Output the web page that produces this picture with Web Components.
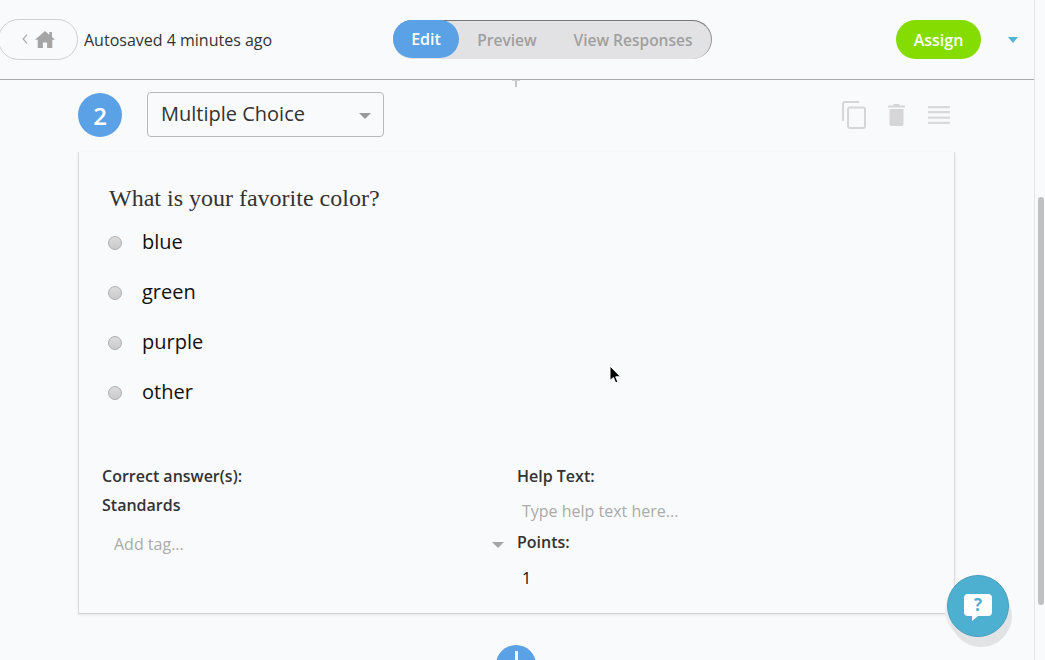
<!DOCTYPE html>
<html>
<head>
<meta charset="utf-8">
<title>Question editor</title>
<style>
html, body { margin: 0; height: 660px; overflow: hidden; background: #f9fafc; }
body { font-family: "Open Sans", sans-serif; color: #333; }
</style>
</head>
<body>
<editor-app>
    <top-bar></top-bar>
    <question-head number="2" type="Multiple Choice"></question-head>
    <question-card>
        <span slot="title">What is your favorite color?</span>
        <choice-option>blue</choice-option>
        <choice-option>green</choice-option>
        <choice-option>purple</choice-option>
        <choice-option>other</choice-option>
    </question-card>
    <add-button></add-button>
</editor-app>
<fake-scrollbar></fake-scrollbar>
<help-fab></help-fab>
<mouse-cursor></mouse-cursor>

<script>
(() => {
    const define = (name, html, init) => {
        customElements.define(name, class extends HTMLElement {
            constructor() {
                super();
                this.attachShadow({mode: 'open'});
            }
            connectedCallback() {
                this.shadowRoot.innerHTML = typeof html === 'function' ? html(this) : html;
                if (init) init(this);
            }
        });
    };

    define('editor-app', `
    <style>
    :host { display: flex; flex-direction: column; width: 1034px; height: 660px; overflow: hidden; }
    </style>
    <slot></slot>`);

    define('top-bar', `
    <style>
    :host { display: flex; align-items: center; box-sizing: border-box; height: 80px; flex: none;
        border-bottom: 1px solid #a9aaad; position: relative; padding: 0 16px 0 0; }
    .home { box-sizing: border-box; width: 80px; height: 41px; margin-left: -2px; flex: none;
        border: 1px solid #cfcfd1; border-radius: 21px; display: flex; align-items: center; padding-left: 23px; gap: 7px; }
    .home svg { display: block; }
    .home .chev { margin-top: -2px; }
    .saved { font-size: 16px; margin: 1px 0 0 6px; width: 309px; flex: none; color: #333; white-space: nowrap; }
    .seg { display: flex; align-items: stretch; box-sizing: border-box; width: 319px; height: 39px; flex: none; background: #e2e2e4;
        border-radius: 20px; border-top: 1px solid #77787a; border-right: 1px solid #98989a; font-size: 15.5px; font-weight: 600; color: #a09f9f; }
    .seg span { display: flex; align-items: center; justify-content: center; padding-bottom: 1px; }
    .seg .on { width: 66px; margin-top: -1px; background: #5ba1e5; color: #fff; border-radius: 19px; height: 37px; font-size: 16px; }
    .prev { width: 96px; }
    .view { width: 156px; }
    .assign { margin-left: 184px; box-sizing: border-box; width: 85px; height: 39px; flex: none; border-radius: 20px; background: #85dc00; color: #fff;
        font-size: 16px; font-weight: 600; display: flex; align-items: center; justify-content: center; }
    .caret { margin-left: 27px; width: 0; height: 0; border: 5.5px solid transparent; border-top: 6px solid #4fb3d4; border-bottom: 0; }
    .tick { position: absolute; left: 515px; top: 80px; width: 2px; height: 7px; background: #c4c4c6; }
    .tick::before { content: ""; position: absolute; left: -3px; top: 0; width: 8px; height: 1px; background: #d4d4d6; }
    </style>
    <div class="home">
        <svg class="chev" width="6" height="10" viewBox="0 0 6 10"><path d="M5 .7 1.200 5 5 9.300" fill="none" stroke="#aaa" stroke-width="1.2"/></svg>
        <svg width="20" height="17" viewBox="0 0 20 17"><path d="M10 0 0 8.800h2.700V17h5.200v-5.600h4.200V17h5.200V8.800H20l-3-2.700V1h-2.600v2.800z" fill="#a5a5a5"/></svg>
    </div>
    <div class="saved">Autosaved 4 minutes ago</div>
    <div class="seg"><span class="on">Edit</span><span class="prev">Preview</span><span class="view">View Responses</span></div>
    <div class="assign">Assign</div>
    <div class="caret"></div>
    <div class="tick"></div>`);

    define('question-head', el => `
    <style>
    :host { display: flex; align-items: center; flex: none; box-sizing: border-box; height: 72px; padding: 12px 84px 15px 78px; }
    .num { width: 44px; height: 44px; border-radius: 50%; background: #5ba1e5; color: #fff; font-size: 24px; font-weight: 600;
        display: flex; align-items: center; justify-content: center; flex: none; margin-top: 1px; }
    .select { box-sizing: border-box; width: 237px; height: 45px; margin-left: 25px; border: 1px solid #b9b9bb; border-radius: 4px; flex: none;
        display: flex; align-items: center; justify-content: space-between; padding: 0 12px 0 13px; font-size: 20px; color: #333; }
    .select span { padding-bottom: 2px; }
    .select i { width: 0; height: 0; border: 6px solid transparent; border-top: 6px solid #999; border-bottom: 0; margin-top: 2px; }
    .tools { margin-left: auto; display: flex; align-items: center; gap: 23px; padding-top: 1px; }
    .tools svg:first-child { margin-right: -1px; }
    svg { display: block; }
    </style>
    <div class="num">${el.getAttribute('number')}</div>
    <div class="select"><span>${el.getAttribute('type')}</span><i></i></div>
    <div class="tools">
        <svg width="24" height="28" viewBox="0 0 24 28"><path d="M17 1H3Q1 1 1 3v17" fill="none" stroke="#d6d6d8" stroke-width="2"/><rect x="6" y="6.500" width="17" height="20.500" rx="2" fill="none" stroke="#d6d6d8" stroke-width="2"/></svg>
        <svg width="17" height="22" viewBox="0 0 17 22"><path d="M0 1.500h5.500V0h6v1.500H17v2H0zM1.500 5h14v15q0 2-2 2h-10q-2 0-2-2z" fill="#d6d6d8"/></svg>
        <svg width="22" height="18" viewBox="0 0 22 18"><path d="M0 0h22v2.200H0zM0 5h22v2.200H0zM0 10.500h22v2.200H0zM0 15.800h22V18H0z" fill="#d9d9db"/></svg>
    </div>`);

    define('question-card', `
    <style>
    :host { display: block; box-sizing: border-box; flex: none; width: 877px; height: 462px; margin-left: 78px;
        border: 1px solid #dcdcde; border-top: 0; border-bottom: 1px solid #d3d3d5; box-shadow: 0 1px 2px #e4e4e6; padding: 30px 23px 0 23px; }
    .title { font-family: "Liberation Serif", serif; font-size: 24px; line-height: 32px; color: #333; padding-left: 7px; }
    .opts { display: flex; flex-direction: column; margin-top: 2px; padding-left: 6px; }
    .bottom { display: grid; grid-template-columns: 415px 1fr; margin-top: 46px; font-size: 16px; }
    .col { display: flex; flex-direction: column; }
    b { font-weight: 600; color: #333; line-height: 29px; display: block; white-space: nowrap; }
    .tag { display: flex; justify-content: space-between; align-items: center; padding: 13px 13px 0 12px; line-height: 22px; color: #aaa; font-size: 16px; }
    .tag i { width: 0; height: 0; border: 6px solid transparent; border-top: 6px solid #a5a5a5; border-bottom: 0; margin-top: 2px; }
    .help { color: #aaa; font-size: 16px; line-height: 24px; padding: 8px 0 0 5px; }
    .pts { margin-top: 5px; }
    .one { font-size: 16px; color: #111; line-height: 24px; padding: 9px 0 0 5px; }
    </style>
    <div class="title"><slot name="title"></slot></div>
    <div class="opts"><slot></slot></div>
    <div class="bottom">
        <div class="col">
            <b>Correct answer(s):</b>
            <b>Standards</b>
            <div class="tag"><span>Add tag...</span><i></i></div>
        </div>
        <div class="col">
            <b>Help Text:</b>
            <div class="help">Type help text here...</div>
            <b class="pts">Points:</b>
            <div class="one">1</div>
        </div>
    </div>`);

    define('choice-option', `
    <style>
    :host { display: flex; align-items: center; height: 50px; font-size: 20px; color: #111; }
    i { width: 14px; height: 14px; box-sizing: border-box; border-radius: 50%; flex: none; margin: 4px 20px 0 0;
        background: linear-gradient(#dcdcdc, #cacaca); border: 1px solid #aeaeae; }
    </style>
    <i></i><slot></slot>`);

    define('add-button', `
    <style>
    :host { display: block; flex: none; width: 40px; height: 40px; margin: 31px 0 0 496px; border-radius: 50%; background: #5ba1e5; position: relative; }
    :host::before { content: ""; position: absolute; left: 18.500px; top: 6px; width: 3px; height: 20px; background: #f2f6fc; }
    </style>`);

    define('fake-scrollbar', `
    <style>
    :host { position: absolute; left: 1034px; top: 0; width: 11px; height: 660px; box-sizing: border-box; background: #f9fafc; border-left: 1px solid #e4e4e6; }
    div { position: absolute; left: 3px; top: 197px; width: 6px; height: 408px; border-radius: 3px; background: #c1c1c1; }
    </style>
    <div></div>`);

    define('help-fab', `
    <style>
    :host { position: absolute; left: 947px; top: 575px; width: 62px; height: 62px; box-sizing: border-box; border-radius: 50%; background: #4eb0d1;
        border: 1px solid #4a9dbb; box-shadow: 3px 10px 0 #e2e3e5, -2px 4px 0 #ebecee; display: flex; align-items: center; justify-content: center; }
    svg { display: block; margin-top: 2px; }
    text { font-family: "Open Sans", sans-serif; font-weight: 700; font-size: 17px; fill: #4eb0d1; }
    </style>
    <svg width="28" height="27" viewBox="0 0 28 27">
        <path d="M4 0h20q4 0 4 4v14q0 4-4 4H14l-6 5v-5H4q-4 0-4-4V4q0-4 4-4z" fill="#fff"/>
        <text x="14" y="17" text-anchor="middle">?</text>
    </svg>`);

    define('mouse-cursor', `
    <style>
    :host { position: absolute; left: 609px; top: 365px; width: 12px; height: 19px; }
    svg { display: block; }
    </style>
    <svg width="12" height="19" viewBox="0 0 12 19"><path d="M1 1v14.500l3.400-3 2.300 5.500 2.200-1-2.200-5.200h4.800z" fill="#000" stroke="#fff" stroke-width="1"/></svg>`);
})();
</script>
</body>
</html>
